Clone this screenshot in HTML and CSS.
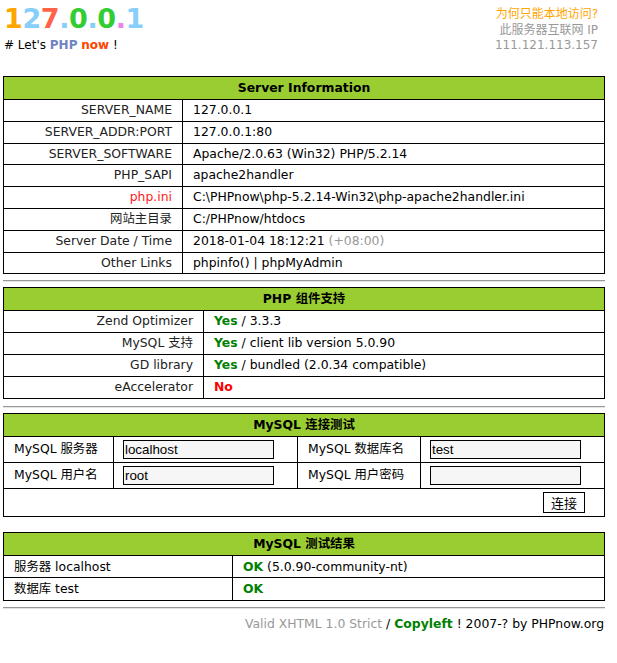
FILE: index.html
```html
<!DOCTYPE html>
<html lang="zh-CN">
<head>
<meta charset="utf-8">
<title>PHPnow</title>
<link rel="stylesheet" href="styles.css">
</head>
<body>
<div class="page">
  <div class="head">
    <div class="brand">
      <div class="title"><span class="c1">1</span><span class="c2">2</span><span class="c3">7</span><span class="c2">.</span><span class="c4">0</span><span class="c2">.</span><span class="c4">0</span><span class="c5">.</span><span class="c2">1</span></div>
      <div class="slogan"># Let's <b class="php">PHP</b> <b class="now">now</b> !</div>
    </div>
    <div class="ipbox">
      <div class="why">为何只能本地访问?</div>
      <div class="ip">此服务器互联网 IP</div>
      <div class="ip">111.121.113.157</div>
    </div>
  </div>

  <table class="grid info">
    <colgroup><col class="w1"><col></colgroup>
    <tr><th colspan="2">Server Information</th></tr>
    <tr><td class="lbl">SERVER_NAME</td><td>127.0.0.1</td></tr>
    <tr><td class="lbl">SERVER_ADDR:PORT</td><td>127.0.0.1:80</td></tr>
    <tr><td class="lbl">SERVER_SOFTWARE</td><td>Apache/2.0.63 (Win32) PHP/5.2.14</td></tr>
    <tr><td class="lbl">PHP_SAPI</td><td>apache2handler</td></tr>
    <tr><td class="lbl red">php.ini</td><td>C:\PHPnow\php-5.2.14-Win32\php-apache2handler.ini</td></tr>
    <tr><td class="lbl">网站主目录</td><td>C:/PHPnow/htdocs</td></tr>
    <tr><td class="lbl">Server Date / Time</td><td>2018-01-04 18:12:21 <span class="gray">(+08:00)</span></td></tr>
    <tr><td class="lbl">Other Links</td><td>phpinfo() | phpMyAdmin</td></tr>
  </table>

  <hr class="sep">

  <table class="grid comp">
    <colgroup><col class="w2"><col></colgroup>
    <tr><th colspan="2">PHP 组件支持</th></tr>
    <tr><td class="lbl">Zend Optimizer</td><td><b class="yes">Yes</b> / 3.3.3</td></tr>
    <tr><td class="lbl">MySQL 支持</td><td><b class="yes">Yes</b> / client lib version 5.0.90</td></tr>
    <tr><td class="lbl">GD library</td><td><b class="yes">Yes</b> / bundled (2.0.34 compatible)</td></tr>
    <tr><td class="lbl">eAccelerator</td><td><b class="no">No</b></td></tr>
  </table>

  <hr class="sep sep2">

  <table class="grid dbform">
    <colgroup><col class="f1"><col class="f2"><col class="f3"><col></colgroup>
    <tr><th colspan="4">MySQL 连接测试</th></tr>
    <tr>
      <td class="flbl">MySQL 服务器</td><td class="fin"><input class="box" type="text" value="localhost"></td>
      <td class="flbl">MySQL 数据库名</td><td class="fin"><input class="box" type="text" value="test"></td>
    </tr>
    <tr>
      <td class="flbl">MySQL 用户名</td><td class="fin"><input class="box" type="text" value="root"></td>
      <td class="flbl">MySQL 用户密码</td><td class="fin"><input class="box" type="password" value=""></td>
    </tr>
    <tr><td colspan="4" class="act"><button class="btn" type="button">连接</button></td></tr>
  </table>

  <table class="grid result">
    <colgroup><col class="w3"><col></colgroup>
    <tr><th colspan="2">MySQL 测试结果</th></tr>
    <tr><td class="rl">服务器 localhost</td><td class="rv"><b class="yes">OK</b> (5.0.90-community-nt)</td></tr>
    <tr><td class="rl">数据库 test</td><td class="rv"><b class="yes">OK</b></td></tr>
  </table>

  <hr class="sep foot-sep">

  <div class="footer"><span class="gray">Valid XHTML 1.0 Strict</span> / <b class="yes">Copyleft</b> ! 2007-? by PHPnow.org</div>
</div>
</body>
</html>
```

FILE: styles.css
```css
body {
  margin: 0;
  font-family: "DejaVu Sans", Verdana, "Noto Sans CJK SC", sans-serif;
  font-size: 12.4px;
  color: #000;
  background: #fff;
}
.page {
  width: 602px;
  margin-left: 3px;
}
.head {
  display: flex;
  justify-content: space-between;
  height: 76px;
}
.title {
  font-size: 27px;
  font-weight: bold;
  line-height: 28px;
  letter-spacing: -0.4px;
  margin-top: 5px;
  padding-left: 1px;
}
.c1 { color: #ffa500; }
.c2 { color: #87cefa; }
.c3 { color: #ff6347; }
.c4 { color: #32cd32; }
.c5 { color: #ee82ee; }
.slogan {
  margin-top: 5px;
  font-size: 12px;
  line-height: 15px;
  padding-left: 1px;
}
.php { color: #6f83c2; }
.now { color: #ff4500; }
.ipbox {
  margin-top: 7px;
  margin-right: 7px;
  text-align: right;
  font-size: 12px;
  line-height: 15.5px;
}
.why { color: #ffa500; }
.ip { color: #999; }

.grid {
  width: 602px;
  border-collapse: collapse;
  table-layout: fixed;
  border: 1px solid #000;
}
.grid th {
  background: #9acd32;
  border: 1px solid #000;
  font-weight: bold;
  line-height: 18px;
  padding: 2px 0;
  text-align: center;
}
.grid td {
  border: 1px solid #000;
  line-height: 16.8px;
  padding: 2px 10px;
}
.w1 { width: 179px; }
.w2 { width: 200px; }
.w3 { width: 229px; }
.f1 { width: 110px; }
.f2 { width: 184px; }
.f3 { width: 123px; }
.lbl { text-align: right; color: #222; }
.red { color: #ff2020; }
.gray { color: #999; }
.yes { color: #008000; }
.no { color: #ff0000; }

.sep {
  height: 0;
  border: 0;
  border-top: 1px solid #999;
  border-bottom: 1px solid #e4e4e4;
  margin: 6px 0 5px;
}
.sep2 { margin: 7px 0 5px; }

.grid td.flbl {
  padding: 3px 10px;
}
.grid td.fin {
  padding: 3px 9px;
}
.box {
  display: block;
  box-sizing: border-box;
  width: 151px;
  height: 19px;
  margin: 0;
  padding: 0 1px;
  border: 1px solid #000;
  background: #f6f6f6;
  font-family: "Liberation Sans", Arial, "Noto Sans CJK SC", sans-serif;
  font-size: 13.33px;
  color: #000;
}
.grid td.act {
  text-align: right;
  padding: 3px 19px 3px 10px;
  line-height: 21px;
}
.btn {
  display: inline-block;
  vertical-align: top;
  box-sizing: border-box;
  height: 21px;
  padding: 0 7px;
  margin: 0;
  border: 1px solid #000;
  background: #fff;
  font-family: "Noto Sans CJK SC", sans-serif;
  font-size: 13px;
  line-height: 19px;
  color: #000;
}
.result {
  margin-top: 15px;
}
.grid td.rl,
.grid td.rv { padding: 2px 10px; line-height: 17.6px; }
.foot-sep { margin-top: 6px; }
.footer {
  text-align: right;
  padding-right: 1px;
  margin-top: 7px;
  line-height: 16px;
}
```
